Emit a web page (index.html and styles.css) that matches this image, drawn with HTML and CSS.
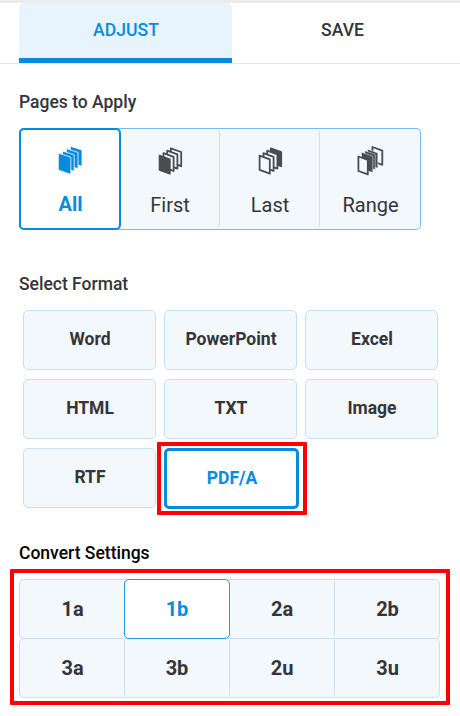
FILE: index.html
```
<!DOCTYPE html>
<html lang="en">

<head>
    <meta charset="UTF-8">
    <title>Convert</title>
    <link rel="stylesheet" href="styles.css">
</head>

<body>
    <div class="tabs">
        <a class="tab active" href="javascript:;">ADJUST</a>
        <a class="tab" href="javascript:;">SAVE</a>
    </div>
    <div class="panel">
        <h3 class="title">Pages to Apply</h3>
        <div class="pages">
            <div class="page-item active">
                <svg class="icon" viewBox="8 5 25 31">
                    <g class="solid">
                        <path d="M20.3 6.2L32 10V26.4L20.3 22.4z" />
                        <path d="M16.4 8.6L28 12.4V28.8L16.4 24.8z" />
                        <path d="M12.5 11L24.2 14.8V31.2L12.5 27.2z" />
                        <path d="M8.3 13L20.8 17.2V34.4L8.3 30z" />
                    </g>
                </svg>
                <span>All</span>
            </div>
            <div class="page-item">
                <svg class="icon" viewBox="8 5 25 31">
                    <g class="line">
                        <path d="M20.8 8.3L31.2 12V26.2L20.8 22.4z" />
                        <path d="M17.2 10.7L27.4 14.4V28.6L17.2 24.8z" />
                        <path d="M13.5 13.1L23.6 16.8V31L13.5 27.2z" />
                        <path class="fill" d="M9.6 15.6L19.8 19.3V33.7L9.6 29.8z" />
                    </g>
                </svg>
                <span>First</span>
            </div>
            <div class="page-item">
                <svg class="icon" viewBox="8 5 25 31">
                    <g class="line">
                        <path class="fill" d="M20.8 8.3L31.2 12V26.2L20.8 22.4z" />
                        <path d="M17.2 10.7L27.4 14.4V28.6L17.2 24.8z" />
                        <path d="M13.5 13.1L23.6 16.8V31L13.5 27.2z" />
                        <path d="M9.6 15.6L19.8 19.3V33.7L9.6 29.8z" />
                    </g>
                </svg>
                <span>Last</span>
            </div>
            <div class="page-item">
                <svg class="icon wide" viewBox="7 5 27 31">
                    <g class="line">
                        <path d="M22.4 7L32.3 10.6V24.8L22.4 21z" />
                    </g>
                    <g class="solid dark">
                        <path d="M17.6 9.2L27.8 12.9V28.2L17.6 24.6z" />
                        <path d="M14.8 10.7L25.2 14.4V29.8L14.8 26.2z" />
                        <path d="M11.5 12.2L22.8 16.2V32.6L11.5 28.8z" />
                    </g>
                    <g class="line">
                        <path d="M8.4 16.5L17.8 20V34.4L8.4 31z" />
                    </g>
                </svg>
                <span>Range</span>
            </div>
        </div>

        <h3 class="title format-title">Select Format</h3>
        <div class="formats">
            <div class="format">Word</div>
            <div class="format">PowerPoint</div>
            <div class="format">Excel</div>
            <div class="format">HTML</div>
            <div class="format">TXT</div>
            <div class="format">Image</div>
            <div class="format">RTF</div>
            <div class="format active">PDF/A</div>
        </div>

        <h3 class="title convert-title">Convert Settings</h3>
        <div class="levels">
            <div class="level-row">
                <div class="level">1a</div>
                <div class="level active">1b</div>
                <div class="level">2a</div>
                <div class="level">2b</div>
            </div>
            <div class="level-row">
                <div class="level">3a</div>
                <div class="level">3b</div>
                <div class="level">2u</div>
                <div class="level">3u</div>
            </div>
        </div>
    </div>
</body>

</html>
```
FILE: styles.css
```
* {
    padding: 0;
    margin: 0;
    box-sizing: border-box;
}

body {
    height: 716px;
    border-top: 3px solid #ebebeb;
    background: #fff;
    color: #333538;
    font-family: Roboto, "Liberation Sans", sans-serif;
    overflow: hidden;
}

a {
    text-decoration: none;
    color: inherit;
}

.tabs {
    display: flex;
    gap: 4px;
    height: 61px;
    padding-left: 19px;
    border-bottom: 1px solid #e5e5e5;
}

.tab {
    width: 213px;
    height: 60px;
    line-height: 54px;
    font-size: 17.6px;
    font-weight: 500;
    text-align: center;
}

.tab.active {
    padding-left: 1px;
    border-bottom: 5px solid #058ce1;
    border-radius: 5px 5px 0 0;
    background: #e7f4fe;
    color: #058ce1;
}

.panel {
    padding: 27px 0 0 19px;
}

.title {
    height: 22px;
    line-height: 22px;
    font-size: 17.5px;
    font-weight: 500;
}

/* pages */
.pages {
    display: grid;
    grid-template-columns: 101px 100px 100px 101px;
    width: 402px;
    height: 102px;
    margin-top: 15px;
    border-radius: 5px;
    background: #f3f8fd;
    box-shadow: inset 0 0 0 1px #76bdec;
}

.page-item {
    display: flex;
    flex-direction: column;
    align-items: center;
    padding-top: 17px;
    font-size: 20px;
    line-height: 24px;
}

.page-item:nth-child(2),
.page-item:nth-child(3) {
    margin: 1px 0;
    padding: 16px 0 0 1px;
    border-right: 1px solid #c4e2f6;
    border-radius: 0 5px 5px 0;
}

.page-item.active {
    width: 102px;
    padding: 15px 0 0 1px;
    border: 2px solid #058ce1;
    border-radius: 5px;
    background: #fff;
    color: #058ce1;
    font-weight: 700;
}

.icon {
    width: 25px;
    height: 31px;
    margin-bottom: 17px;
}

.icon.wide {
    width: 27px;
}

.page-item.active .icon {
    margin-bottom: 16px;
}

.solid {
    fill: #058ce1;
    stroke: #fff;
    stroke-width: .8;
    stroke-linejoin: round;
}

.solid.dark {
    fill: #4a4c4e;
    stroke: #f3f8fd;
    stroke-width: .5;
}

.line {
    fill: #f3f8fd;
    stroke: #4a4c4e;
    stroke-width: 1.8;
    stroke-linejoin: round;
}

.line .fill {
    fill: #4a4c4e;
}

/* formats */
.format-title {
    margin-top: 43px;
}

.formats {
    display: grid;
    grid-template-columns: repeat(3, 133px);
    grid-auto-rows: 60px;
    gap: 9px 8px;
    margin: 15px 0 0 4px;
}

.format {
    padding-left: 1px;
    border: 1px solid #c3e1f7;
    border-radius: 5px;
    background: #f3f8fd;
    line-height: 56px;
    font-size: 17.5px;
    font-weight: 700;
    text-align: center;
}

.format.active {
    position: relative;
    width: 135px;
    height: 61px;
    border: 3px solid #058ce1;
    background: #fff;
    color: #058ce1;
    line-height: 54px;
}

/* red marker over the chosen format */
.format.active::after {
    content: "";
    position: absolute;
    top: -9px;
    right: -11px;
    bottom: -9px;
    left: -10px;
    border: 4px solid #f00;
    border-radius: 1px;
}

/* convert settings */
.convert-title {
    margin-top: 34px;
    color: #000;
}

.levels {
    position: relative;
    width: 421px;
    margin-top: 15px;
}

.levels::after {
    content: "";
    position: absolute;
    top: -10px;
    right: -10px;
    bottom: -7px;
    left: -9px;
    border: 4px solid #f00;
    border-radius: 1px;
}

.level-row {
    display: grid;
    grid-template-columns: 106px 105px 105px 105px;
    grid-template-rows: 60px;
    height: 60px;
    border-radius: 5px;
    background: #f3f8fd;
    box-shadow: inset 0 0 0 1px #c3e1f7;
}

.level-row + .level-row {
    margin-top: -1px;
}

.level {
    margin: 2px 0 3px;
    border-right: 1px solid #c3e1f7;
    line-height: 56px;
    font-size: 20px;
    font-weight: 700;
    text-align: center;
}

.level:first-child {
    padding-left: 2px;
}

.level:last-child {
    border-right: 0;
}

.level.active {
    position: relative;
    z-index: 1;
    width: 106px;
    margin: 0 0 0 -1px;
    border: 1px solid #2399e5;
    border-radius: 5px;
    background: #fff;
    color: #058ce1;
    line-height: 58px;
}
```
